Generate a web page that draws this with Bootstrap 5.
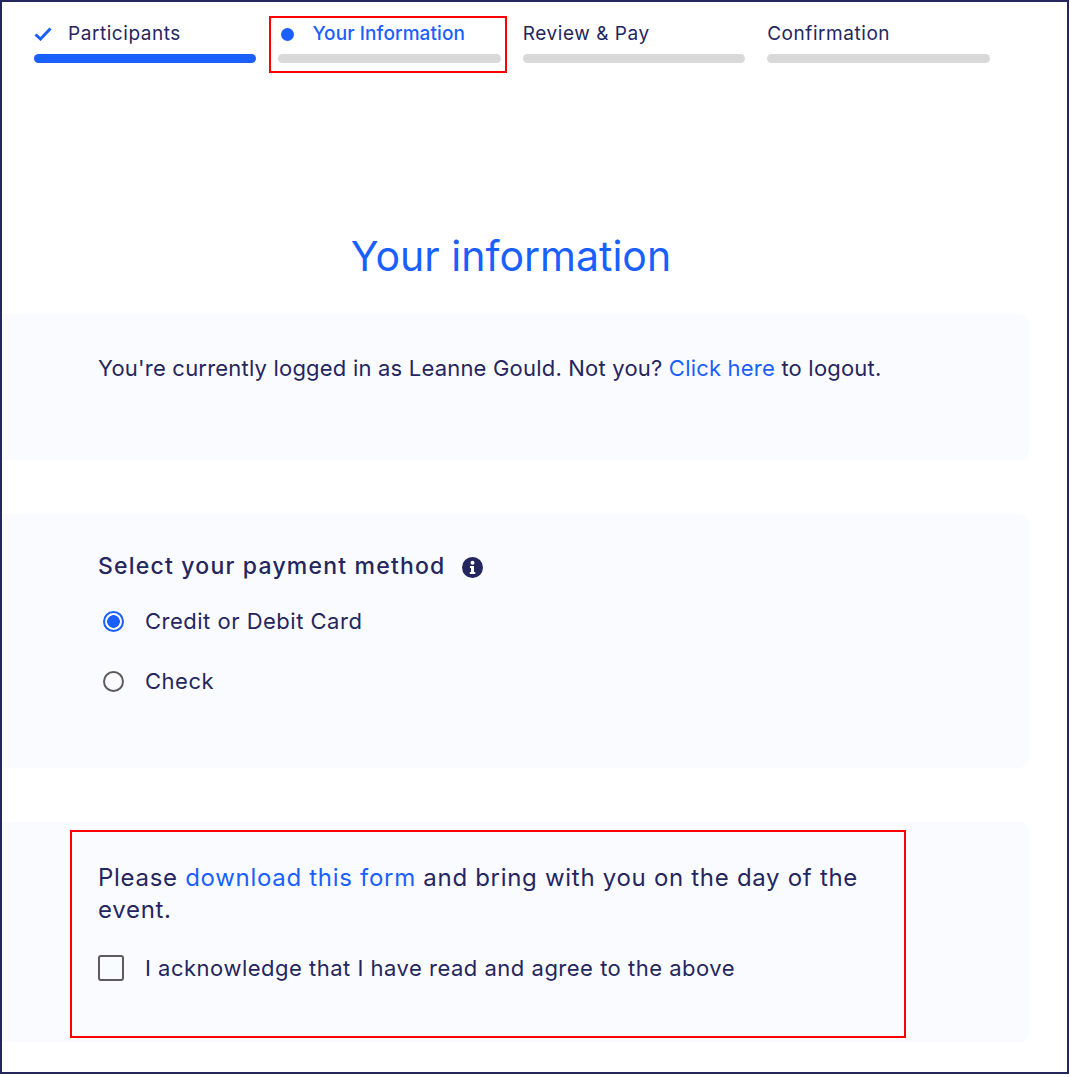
<!DOCTYPE html>
<html lang="en">
<head>
  <meta charset="UTF-8" />
  <title>Your information</title>
  <link href="https://cdn.jsdelivr.net/npm/bootstrap@5.3.0/dist/css/bootstrap.min.css" rel="stylesheet">
  <style>
    body { font-family: "Inter", "Liberation Sans", sans-serif; color: #25265e; background: #fff; }
    .page-frame { width: 1069px; height: 1074px; border: 2px solid #25265e; overflow: hidden; }
    .steps { padding: 14px 0 0 32px; gap: 22px; height: 231px; }
    .step { width: 222.4px; font-size: 19px; line-height: 36px; letter-spacing: .55px; }
    .step-icon { width: 34px; }
    .step-bar { height: 9px; border-radius: 5px; background: #d9d9d9; margin-top: 2px; }
    .step-done .step-bar { background: #1a5fff; }
    .step-active { color: #1a5fff; font-weight: 500; letter-spacing: .1px; }
    .step-dot { width: 13px; height: 13px; border-radius: 50%; background: #1a5fff; margin-left: 3px; }
    .red-box { position: absolute; border: 2px solid #f00; pointer-events: none; }
    .step-box { left: -9.4px; right: -6.2px; top: 0; bottom: -10px; }
    .page-title { width: 1018px; font-size: 41px; font-weight: 400; color: #1a5fff; text-align: center; line-height: 48px; margin: -1px 0 34px; }
    .panel-box { width: 1027px; background: #fafbff; border-radius: 0 10px 10px 0; padding-left: 96px; margin-bottom: 54px; font-size: 22px; letter-spacing: .2px; }
    .panel-login { height: 146px; padding-top: 38px; line-height: 32px; }
    .panel-pay { height: 254px; padding-top: 36px; }
    .panel-form { height: 220px; padding-top: 40px; line-height: 32px; margin-bottom: 0; }
    .panel-box a { color: #1a5fff; text-decoration: none; }
    .pay-title { font-size: 23px; font-weight: 500; line-height: 32px; margin-bottom: 9px; letter-spacing: 1.2px; gap: 16px; }
    .pay-title svg { margin-top: 3px; }
    .pay-option { padding-left: 5px; height: 60px; font-size: 22px; letter-spacing: .5px; }
    .pay-option .form-check-input { width: 21px; height: 21px; margin: 0 21px 0 0; border: 2px solid #5f5a60; background-color: transparent; flex: none; }
    .pay-option .form-check-input:checked { border-color: #1a5fff; background-color: transparent; background-image: radial-gradient(circle, #1a5fff 0 6px, transparent 6.6px); }
    .form-copy { font-size: 24px; letter-spacing: .7px; }
    .ack-row { margin-top: 26px; font-size: 22px; letter-spacing: .5px; }
    .ack-row .form-check-input { width: 26px; height: 26px; margin: 0 21px 0 0; border: 2px solid #5f5a60; border-radius: 3px; background-color: transparent; flex: none; }
    .form-box { left: 68px; width: 836px; top: 8px; height: 208px; }
  </style>
</head>
<body>
  <div class="page-frame">
    <!-- Steps -->
    <div class="steps d-flex align-items-start">
      <div class="step step-done">
        <div class="d-flex align-items-center">
          <div class="step-icon">
            <svg class="d-block" width="18" height="14" viewBox="0 0 18 14"><path d="M1.5 7.5 6.5 12 16.5 1.5" fill="none" stroke="#1a5fff" stroke-width="3"/></svg>
          </div>
          <span>Participants</span>
        </div>
        <div class="step-bar"></div>
      </div>
      <div class="step step-active position-relative">
        <div class="d-flex align-items-center">
          <div class="step-icon"><div class="step-dot"></div></div>
          <span>Your Information</span>
        </div>
        <div class="step-bar"></div>
        <div class="red-box step-box"></div>
      </div>
      <div class="step">
        <div>Review &amp; Pay</div>
        <div class="step-bar"></div>
      </div>
      <div class="step">
        <div>Confirmation</div>
        <div class="step-bar"></div>
      </div>
    </div>

    <h1 class="page-title">Your information</h1>

    <div class="panel-box panel-login">
      You're currently logged in as Leanne Gould. Not you? <a href="#">Click here</a> to logout.
    </div>

    <div class="panel-box panel-pay">
      <div class="pay-title d-flex align-items-center">
        <span>Select your payment method</span>
        <svg width="21" height="21" viewBox="0 0 21 21"><circle cx="10.5" cy="10.5" r="10.5" fill="#25265e"/><circle cx="10.5" cy="5.8" r="2" fill="#fff"/><path d="M8 9h4v6h1.3v2H7.8v-2H9v-4H8z" fill="#fff"/></svg>
      </div>
      <div class="pay-option d-flex align-items-center">
        <input class="form-check-input" type="radio" name="pay" id="payCard" checked>
        <label for="payCard">Credit or Debit Card</label>
      </div>
      <div class="pay-option d-flex align-items-center">
        <input class="form-check-input" type="radio" name="pay" id="payCheck">
        <label for="payCheck">Check</label>
      </div>
    </div>

    <div class="panel-box panel-form position-relative">
      <div class="red-box form-box"></div>
      <div class="form-copy">Please <a href="#">download this form</a> and bring with you on the day of the<br>event.</div>
      <div class="ack-row d-flex align-items-center">
        <input class="form-check-input" type="checkbox" id="ack">
        <label for="ack">I acknowledge that I have read and agree to the above</label>
      </div>
    </div>
  </div>
  <script src="https://cdn.jsdelivr.net/npm/bootstrap@5.3.0/dist/js/bootstrap.bundle.min.js"></script>
</body>
</html>
